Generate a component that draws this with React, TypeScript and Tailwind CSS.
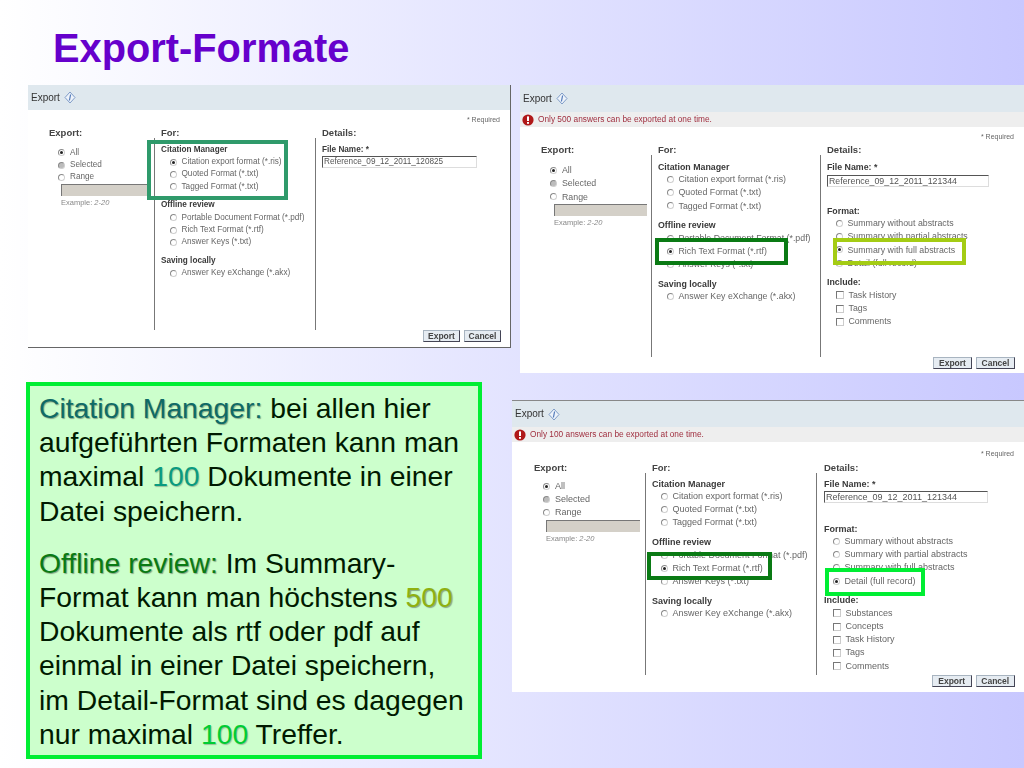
import React from 'react';

const Radio = ({ on, grey }: { on?: boolean; grey?: boolean }) => (
  <span className={`flex h-[7px] w-[7px] shrink-0 items-center justify-center rounded-full border border-[#8a8a8a] border-r-[#d0d0d0] border-b-[#d0d0d0] ${grey ? 'bg-[#bcbcbc]' : 'bg-white'}`}>
    {on && <span className="h-[3px] w-[3px] rounded-full bg-[#222]" />}
  </span>
);

const Check = () => (
  <span className="block h-[8px] w-[8px] shrink-0 border border-[#777] border-r-[#ccc] border-b-[#ccc] bg-white" />
);

const InfoIcon = () => (
  <svg width="12" height="13" viewBox="0 0 12 13" className="ml-[4px]">
    <path d="M6 1 L11 6.5 L6 12 L1 6.5 Z" fill="#eef3fa" stroke="#7f9cc8" strokeWidth="1" strokeLinejoin="round" />
    <path d="M6.6 3.5 L5.4 9.5" stroke="#4f78b8" strokeWidth="1.2" />
  </svg>
);

const ErrorIcon = () => (
  <svg width="12" height="12" viewBox="0 0 12 12" className="mr-[4px] shrink-0">
    <circle cx="6" cy="6" r="5.6" fill="#b01818" />
    <rect x="5" y="2.4" width="2" height="4.6" fill="#fff" />
    <rect x="5" y="8" width="2" height="1.8" fill="#fff" />
  </svg>
);

type Opt = { label: string; on?: boolean };

const Group = ({ title, items, rowH, gap }: { title: string; items: Opt[]; rowH: string; gap: string }) => (
  <div className={gap}>
    <div className="flex h-[12px] items-center font-bold text-[#3a3a3a]">{title}</div>
    {items.map(o => (
      <div key={o.label} className={`flex items-center gap-[4.5px] pl-[9px] ${rowH}`}>
        <Radio on={o.on} />
        <span className="whitespace-nowrap">{o.label}</span>
      </div>
    ))}
  </div>
);

type DialogProps = {
  place: string;
  font: string;
  headH: string;
  error?: string;
  reqTop: string;
  exportCol: string;
  exportTop: string;
  forCol: string;
  detailsHead: string;
  detailsBody: string;
  lineH: string;
  bodyTop: string;
  rowH: string;
  gap: string;
  inputCls: string;
  rangeWrap: string;
  rangeCls: string;
  btns: string;
  citation: string;
  offline: string;
  format?: string[];
  formatOn?: string;
  formatTop?: string;
  include?: string[];
  fileName: string;
};

const Dialog = (p: DialogProps) => {
  const citation = ['Citation export format (*.ris)', 'Quoted Format (*.txt)', 'Tagged Format (*.txt)'];
  const offline = ['Portable Document Format (*.pdf)', 'Rich Text Format (*.rtf)', 'Answer Keys (*.txt)'];
  return (
    <div className={`absolute flex flex-col bg-white font-['Liberation_Sans',Arial,sans-serif] leading-none text-[#666] blur-[0.4px] ${p.place} ${p.font}`}>
      <div className={`flex shrink-0 items-center bg-[#dfe8ee] pl-[3px] text-[10px] text-[#333] ${p.headH}`}>
        Export
        <InfoIcon />
      </div>
      {p.error && (
        <div className="flex h-[15px] shrink-0 items-center bg-[#eeeeee] pl-[2px] text-[8.3px] text-[#a03040]">
          <ErrorIcon />
          {p.error}
        </div>
      )}
      <div className={`flex h-[12px] shrink-0 items-center justify-end pb-[2px] pr-[10px] text-[7px] ${p.reqTop}`}>* Required</div>
      <div className="flex shrink-0">
        <div className={`shrink-0 ${p.exportCol}`}>
          <div className="flex h-[12px] items-end pb-[1px] text-[9.5px] font-bold text-[#444]">Export:</div>
          <div className={`pl-[9px] ${p.exportTop}`}>
            {['All', 'Selected', 'Range'].map(l => (
              <div key={l} className={`flex items-center gap-[5px] ${p.rowH}`}>
                <Radio on={l === 'All'} grey={l === 'Selected'} />
                {l}
              </div>
            ))}
            <div className={p.rangeWrap}>
              <div className={`h-[12px] border-t border-l border-[#777] bg-[#d4d0c8] ${p.rangeCls}`} />
              <div className="mt-[3px] text-[7.5px] text-[#888]">Example: <i>2-20</i></div>
            </div>
          </div>
        </div>
        <div className={`shrink-0 ${p.forCol}`}>
          <div className="flex h-[12px] items-end pb-[1px] pl-[7px] text-[9.5px] font-bold text-[#444]">For:</div>
          <div className={`border-l border-[#777] pl-[6px] ${p.bodyTop} ${p.lineH}`}>
            <Group title="Citation Manager" rowH={p.rowH} gap="" items={citation.map(l => ({ label: l, on: l === p.citation }))} />
            <Group title="Offline review" rowH={p.rowH} gap={p.gap} items={offline.map(l => ({ label: l, on: l === p.offline }))} />
            <Group title="Saving locally" rowH={p.rowH} gap={p.gap} items={[{ label: 'Answer Key eXchange (*.akx)' }]} />
          </div>
        </div>
        <div className="min-w-0 flex-1">
          <div className={`flex h-[12px] items-end pb-[1px] text-[9.5px] font-bold text-[#444] ${p.detailsHead}`}>Details:</div>
          <div className={`border-l border-[#777] ${p.bodyTop} ${p.lineH} ${p.detailsBody}`}>
            <div className="flex h-[12px] items-center font-bold text-[#3a3a3a]">File Name: *</div>
            <div className={`flex h-[12px] items-center border border-[#ddd] border-t-[#555] border-l-[#555] pl-[1px] text-[#555] ${p.inputCls}`}>{p.fileName}</div>
            {p.format && (
              <div className={p.formatTop}>
                <div className="flex h-[12px] items-center font-bold text-[#3a3a3a]">Format:</div>
                {p.format.map(l => (
                  <div key={l} className={`flex items-center gap-[4.5px] pl-[9px] ${p.rowH}`}>
                    <Radio on={l === p.formatOn} />
                    <span className="whitespace-nowrap">{l}</span>
                  </div>
                ))}
              </div>
            )}
            {p.include && (
              <div className={p.gap}>
                <div className="flex h-[12px] items-center font-bold text-[#3a3a3a]">Include:</div>
                {p.include.map(l => (
                  <div key={l} className={`flex items-center gap-[4.5px] pl-[9px] ${p.rowH}`}>
                    <Check />
                    <span>{l}</span>
                  </div>
                ))}
              </div>
            )}
          </div>
        </div>
      </div>
      <div className="flex shrink-0 justify-end pr-[9px]">
        <div className={`flex gap-[4px] ${p.btns}`}>
          {['Export', 'Cancel'].map(b => (
            <div key={b} className="flex h-[12px] flex-1 items-center justify-center border border-[#a8b4c0] border-r-[#445] border-b-[#445] bg-[#e6ecf2] text-[8.5px] font-bold text-[#444]">{b}</div>
          ))}
        </div>
      </div>
    </div>
  );
};

const Box = ({ cls }: { cls: string }) => <div className={`absolute ${cls}`} />;

const App: React.FC = () => {
  const summary = ['Summary without abstracts', 'Summary with partial abstracts', 'Summary with full abstracts', 'Detail (full record)'];
  return (
    <div className="relative h-[768px] w-[1024px] overflow-hidden bg-linear-to-r from-white to-[#c8c8ff] font-['Liberation_Sans',Arial,sans-serif]">
      <h1 className="absolute left-[53px] top-[25px] text-[39.8px] font-bold leading-[46px] text-[#6600cc]">Export-Formate</h1>

      <Dialog
        place="left-[28px] top-[85px] h-[263px] w-[483px] border-r border-b border-[#666]"
        font="text-[8.2px]"
        headH="h-[25px]"
        reqTop="mt-[4px]"
        exportCol="w-[126px] pl-[21px]"
        exportTop="pt-[8.5px]"
        forCol="w-[161px]"
        detailsHead="pl-[7px]"
        detailsBody="pl-[6px]"
        lineH="h-[192px]"
        bodyTop="pt-[6px]"
        rowH="h-[12.4px]"
        gap="mt-[6.4px]"
        inputCls="w-[155px]"
        rangeWrap="ml-[3px]"
        rangeCls="w-[88px]"
        btns="w-[78px]"
        citation="Citation export format (*.ris)"
        offline=""
        fileName="Reference_09_12_2011_120825"
      />
      <Dialog
        place="left-[520px] top-[85px] h-[288px] w-[504px]"
        font="text-[8.8px]"
        headH="h-[27px]"
        error="Only 500 answers can be exported at one time."
        reqTop="mt-[4px]"
        exportCol="w-[131px] pl-[21px]"
        exportTop="pt-[9px]"
        forCol="w-[169px]"
        detailsHead="pl-[7px]"
        detailsBody="pl-[6px]"
        lineH="h-[202px]"
        bodyTop="pt-[6px]"
        rowH="h-[13.2px]"
        gap="mt-[7px]"
        inputCls="w-[162px] mt-[2px]"
        rangeWrap="ml-[4px]"
        rangeCls="w-[93px]"
        btns="w-[82px]"
        citation=""
        offline="Rich Text Format (*.rtf)"
        format={summary}
        formatOn="Summary with full abstracts"
        formatTop="mt-[18px]"
        include={['Task History', 'Tags', 'Comments']}
        fileName="Reference_09_12_2011_121344"
      />
      <Dialog
        place="left-[512px] top-[400px] h-[292px] w-[512px] border-t border-[#888]"
        font="text-[9px]"
        headH="h-[26px]"
        error="Only 100 answers can be exported at one time."
        reqTop="mt-[6px] mb-[1px]"
        exportCol="w-[133px] pl-[22px]"
        exportTop="pt-[7px]"
        forCol="w-[171px]"
        detailsHead="pl-[8px]"
        detailsBody="pl-[7px]"
        lineH="h-[202px]"
        bodyTop="pt-[5px]"
        rowH="h-[13.2px]"
        gap="mt-[7px]"
        inputCls="w-[164px] mt-[1px]"
        rangeWrap="ml-[3px]"
        rangeCls="w-[94px]"
        btns="w-[83px]"
        citation=""
        offline="Rich Text Format (*.rtf)"
        format={summary}
        formatOn="Detail (full record)"
        formatTop="mt-[20px]"
        include={['Substances', 'Concepts', 'Task History', 'Tags', 'Comments']}
        fileName="Reference_09_12_2011_121344"
      />

      <Box cls="left-[147px] top-[140px] h-[60px] w-[141px] border-[4px] border-[#2f9a6b]" />
      <Box cls="left-[655px] top-[238px] h-[27px] w-[133px] border-[4px] border-[#0a7a14]" />
      <Box cls="left-[833px] top-[238px] h-[27px] w-[133px] border-[4px] border-[#a4cc14]" />
      <Box cls="left-[647px] top-[552px] h-[28px] w-[125px] border-[4px] border-[#0a7a14]" />
      <Box cls="left-[825px] top-[568px] h-[28px] w-[100px] border-[4px] border-[#00ee33]" />

      <div className="absolute left-[26px] top-[382px] h-[377px] w-[456px] border-[4px] border-[#00ee33] bg-[#ccffcc] pl-[9px] pr-[10px] pt-[5px] text-[28.3px] leading-[34.2px] text-[#001a00]">
        <p>
          <span className="text-[#0f6a66] [text-shadow:1px_1px_1px_rgba(0,0,0,0.35)]">Citation Manager:</span> bei allen hier aufgeführten Formaten kann man maximal{' '}
          <span className="text-[#0a9a80] [text-shadow:1px_1px_1px_rgba(0,0,0,0.25)]">100</span> Dokumente in einer Datei speichern.
        </p>
        <p className="mt-[18px]">
          <span className="text-[#0a7a14] [text-shadow:1px_1px_1px_rgba(0,0,0,0.35)]">Offline review:</span> Im Summary-Format kann man höchstens{' '}
          <span className="text-[#8fb010] [text-shadow:1px_1px_1px_rgba(0,0,0,0.35)]">500</span> Dokumente als rtf oder pdf auf einmal in einer Datei speichern, im Detail-Format sind es dagegen nur maximal{' '}
          <span className="text-[#00cc33] [text-shadow:1px_1px_1px_rgba(0,0,0,0.25)]">100</span> Treffer.
        </p>
      </div>
    </div>
  );
};

export default App;
